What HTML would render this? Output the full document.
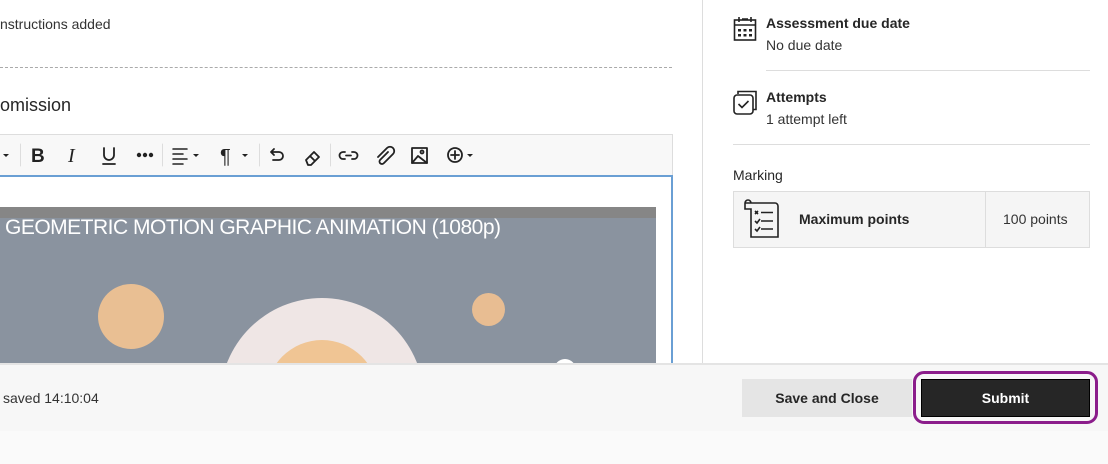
<!DOCTYPE html>
<html style="overflow:hidden"><head><style>
*{margin:0;padding:0;box-sizing:border-box}
html,body{width:1108px;height:464px;overflow:hidden}
body{background:#fff;font-family:"Liberation Sans",sans-serif;color:#262626;position:relative}
.a{position:absolute}
</style></head><body>
<div class="a" style="left:0;top:16px;font-size:14px;color:#333">nstructions added</div>
<div class="a" style="left:0;top:67px;width:672px;border-top:1px dashed #aaa"></div>
<div class="a" style="left:0;top:95px;font-size:18px;color:#262626;font-weight:500">omission</div>

<!-- editor -->
<div class="a" style="left:-2px;top:134px;width:675px;height:232px;border:1px solid #ddd"></div>
<div class="a" style="left:0;top:135px;width:672px;height:41px;background:#f8f8f8"></div>
<div class="a" style="left:0;top:175px;width:673px;height:2px;background:#6a9fd4"></div>
<div class="a" style="left:671px;top:176px;width:2px;height:188px;background:#6a9fd4"></div>
<svg class="a" style="left:0;top:136px" width="672" height="40" viewBox="0 0 672 40" fill="none" stroke="#222" stroke-width="1.8" stroke-linecap="round" stroke-linejoin="round">
<path d="M3 18l3 3 3-3z" fill="#222" stroke="none"/>
<line x1="20.5" y1="8" x2="20.5" y2="30" stroke="#ddd" stroke-width="1"/>
<text x="31" y="26" font-family="Liberation Sans" font-weight="bold" font-size="19" fill="#222" stroke="none">B</text>
<text x="68" y="26" font-family="Liberation Serif" font-style="italic" font-size="20" fill="#222" stroke="none">I</text>
<path d="M104 12v7a5 5 0 0 0 10 0v-7M103 28h12"/>
<circle cx="139" cy="19" r="1.3" fill="#222"/><circle cx="145" cy="19" r="1.3" fill="#222"/><circle cx="151" cy="19" r="1.3" fill="#222"/>
<line x1="162.5" y1="8" x2="162.5" y2="30" stroke="#ddd" stroke-width="1"/>
<path d="M173 13h14M173 18h10M173 23h14M173 28h10" stroke-width="1.5"/>
<path d="M193 18l3 3 3-3z" fill="#222" stroke="none"/>
<text x="220" y="27" font-family="Liberation Sans" font-size="20" fill="#222" stroke="none">¶</text>
<path d="M242 18l3 3 3-3z" fill="#222" stroke="none"/>
<line x1="259.5" y1="8" x2="259.5" y2="30" stroke="#ddd" stroke-width="1"/>
<path d="M274 13l-3 3 3 3M271 16h8a4 4 0 0 1 0 8h-6"/>
<path d="M306 24l8-8 5 5-8 8h-3z M310 20l5 5"/>
<line x1="330.5" y1="8" x2="330.5" y2="30" stroke="#ddd" stroke-width="1"/>
<path d="M345 16h-2a3.5 3.5 0 0 0 0 7h2M352 16h2a3.5 3.5 0 0 1 0 7h-2M346 19.5h5"/>
<path d="M388 16l-8 8a2.5 2.5 0 0 0 4 3l9-9a4 4 0 0 0-6-6l-9 9"/>
<rect x="412" y="12" width="15" height="15"/><path d="M412 27l6-7 9 7"/><circle cx="422" cy="16" r="1.5"/>
<circle cx="455" cy="19" r="7"/><path d="M455 15v8M451 19h8"/>
<path d="M467 18l3 3 3-3z" fill="#222" stroke="none"/>
</svg>

<!-- video image -->
<div class="a" style="left:0;top:207px;width:656px;height:157px;background:#8a939f;overflow:hidden">
<div class="a" style="left:0;top:0;width:656px;height:11px;background:#868686"></div>
<div class="a" style="left:5px;top:9px;color:#fff;font-size:21px;letter-spacing:-0.5px;white-space:nowrap">GEOMETRIC MOTION GRAPHIC ANIMATION (1080p)</div>
<div class="a" style="left:98px;top:77px;width:66px;height:65px;border-radius:50%;background:#e9bf93"></div>
<div class="a" style="left:472px;top:86px;width:33px;height:33px;border-radius:50%;background:#e8bd92"></div>
<div class="a" style="left:220px;top:91px;width:204px;height:204px;border-radius:50%;background:#efe6e5"></div>
<div class="a" style="left:266px;top:133px;width:112px;height:112px;border-radius:50%;background:#f0c594"></div>
<div class="a" style="left:554px;top:152px;width:22px;height:22px;border-radius:50%;background:#fff"></div>
</div>

<div class="a" style="left:702px;top:0;width:1px;height:364px;background:#ddd"></div>

<!-- right panel -->
<svg class="a" style="left:733px;top:16px" width="24" height="26" viewBox="0 0 24 26" fill="none" stroke="#222" stroke-width="1.6">
<rect x="1.5" y="4" width="21" height="20"/><path d="M1.5 9h21M6 1v5M18 1v5M9 3h6"/>
<g fill="#222" stroke="none"><rect x="5" y="13" width="3" height="2.5"/><rect x="10.5" y="13" width="3" height="2.5"/><rect x="16" y="13" width="3" height="2.5"/><rect x="5" y="18" width="3" height="2.5"/><rect x="10.5" y="18" width="3" height="2.5"/><rect x="16" y="18" width="3" height="2.5"/></g>
</svg>
<div class="a" style="left:766px;top:15px;font-size:14px;font-weight:bold;color:#262626">Assessment due date</div>
<div class="a" style="left:766px;top:37px;font-size:14px;color:#333">No due date</div>
<div class="a" style="left:766px;top:70px;width:324px;height:1px;background:#ddd"></div>
<svg class="a" style="left:733px;top:90px" width="25" height="25" viewBox="0 0 25 25" fill="none" stroke="#222" stroke-width="1.6">
<path d="M5 4V1.5h18v18h-2.5"/><rect x="1" y="5" width="19" height="19" rx="3"/><path d="M5.5 14l3.5 3.5 6.5-6.5"/>
</svg>
<div class="a" style="left:766px;top:89px;font-size:14px;font-weight:bold;color:#262626">Attempts</div>
<div class="a" style="left:766px;top:111px;font-size:14px;color:#333">1 attempt left</div>
<div class="a" style="left:733px;top:144px;width:357px;height:1px;background:#ddd"></div>
<div class="a" style="left:733px;top:167px;font-size:14px;color:#262626">Marking</div>
<div class="a" style="left:733px;top:191px;width:357px;height:57px;background:#f5f5f5;border:1px solid #ddd"></div>
<div class="a" style="left:985px;top:191px;width:1px;height:57px;background:#ddd"></div>
<svg class="a" style="left:741px;top:199px" width="40" height="40" viewBox="0 0 40 40" fill="none" stroke="#222" stroke-width="1.6">
<path d="M4 4h30a3 3 0 0 1 3 3v31H10V10H4V4a3 3 0 0 1 6 0"/>
<path d="M14 12l3 3M17 12l-3 3M20 13.5h12M14 22l2 2 3-4M20 22h12M14 30l2 2 3-4M20 30h12"/>
</svg>
<div class="a" style="left:799px;top:211px;font-size:14px;font-weight:bold;color:#262626">Maximum points</div>
<div class="a" style="left:1003px;top:211px;font-size:14px;color:#333">100 points</div>

<!-- footer -->
<div class="a" style="left:0;top:363px;width:1108px;height:2px;background:#e4e4e4"></div>
<div class="a" style="left:0;top:365px;width:1108px;height:66px;background:#f7f7f7"></div>
<div class="a" style="left:0;top:431px;width:1108px;height:33px;background:#fafafa"></div>
<div class="a" style="left:3px;top:390px;font-size:14px;color:#333">saved 14:10:04</div>
<div class="a" style="left:742px;top:379px;width:170px;height:38px;background:#e5e5e5;font-size:14px;font-weight:bold;text-align:center;line-height:38px;color:#262626">Save and Close</div>
<div class="a" style="left:913px;top:371px;width:185px;height:53px;border:3px solid #8b1d8b;border-radius:11px"></div>
<div class="a" style="left:921px;top:379px;width:169px;height:38px;background:#262626;border:1px solid #000;font-size:14px;font-weight:bold;text-align:center;line-height:36px;color:#fff">Submit</div>
</body></html>
